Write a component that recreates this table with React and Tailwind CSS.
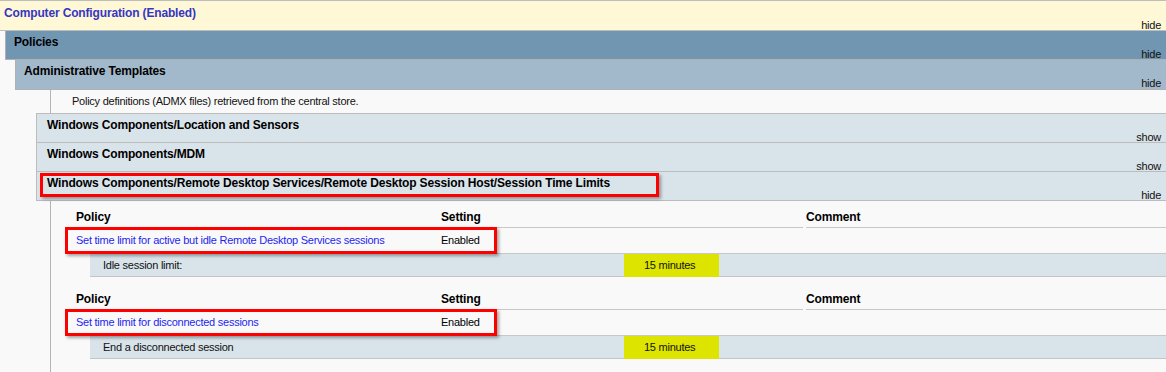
const settings = [
    {
        policy: "Set time limit for active but idle Remote Desktop Services sessions",
        state: "Enabled",
        label: "Idle session limit:",
        value: "15 minutes"
    },
    {
        policy: "Set time limit for disconnected sessions",
        state: "Enabled",
        label: "End a disconnected session",
        value: "15 minutes"
    }
];

const categories = [
    { name: "Windows Components/Location and Sensors", toggle: "show" },
    { name: "Windows Components/MDM", toggle: "show" },
    { name: "Windows Components/Remote Desktop Services/Remote Desktop Session Host/Session Time Limits", toggle: "hide", open: true }
];

// red annotation frame drawn over a row
const Marker = ({ className }) => (
    <div className={`pointer-events-none absolute border-[3px] border-[#ff0000] shadow-[2px_2px_3px_rgba(0,0,0,0.35)] ${className}`} />
);

const SectionHeader = ({ title, toggle, className, titleClass }) => (
    <div className={`flex flex-col ${className}`}>
        <div className={`h-[14px] leading-[14px] text-[12px] font-bold tracking-[-0.15px] ${titleClass}`}>{title}</div>
        <div className="h-[11px] pr-[5px] text-right leading-[11px] text-[#111]">{toggle}</div>
    </div>
);

const PolicyTable = ({ item, first }) => (
    <div className={`ml-[19px] ${first ? "" : "mt-[6px]"}`}>
        <div className="grid h-[27px] grid-cols-[364px_366px_1fr] gap-x-[3px] text-[12px] font-bold leading-[14px] tracking-[-0.15px] text-black">
            <div className="flex items-end border-b border-[#c8c8c8] pb-[3px] pl-[6px]">Policy</div>
            <div className="flex items-end border-b border-[#c8c8c8] pb-[3px] pl-[4px]">Setting</div>
            <div className="flex items-end border-b border-[#c8c8c8] pb-[3px]">Comment</div>
        </div>
        <div className="relative grid h-[26px] grid-cols-[367px_1fr] items-center border-b border-[#c8c8c8]">
            <div className="pl-[6px] text-[#1f1ff0]">{item.policy}</div>
            <div className="pl-[4px] text-black">{item.state}</div>
            <Marker className="-left-[5px] -top-px h-[27px] w-[432px]" />
        </div>
        <div className="ml-[20px] flex h-[23px] items-center border-b border-[#c4c4c4] bg-[#d9e3ea] text-[#111]">
            <div className="w-[534px] pl-[13px]">{item.label}</div>
            <div className="flex h-[23px] w-[95px] items-center bg-[#dde400] pl-[20px]">{item.value}</div>
        </div>
    </div>
);

export default function App() {
    return (
        <div className="h-[372px] w-[1166px] overflow-hidden bg-[#f9f9f9] font-['Liberation_Sans',Arial,sans-serif] text-[11px] tracking-[-0.25px]">
            <SectionHeader
                title="Computer Configuration (Enabled)"
                toggle="hide"
                className="h-[31px] border-y border-[#bdbdbd] bg-[#fff8d6] pl-[4px] pt-[5px]"
                titleClass="text-[#3636c2]"
            />
            <div className="ml-[5px]">
                <SectionHeader
                    title="Policies"
                    toggle="hide"
                    className="h-[29px] border-b border-l border-[#b0b0b0] bg-[#7096b1] pl-[8px] pt-[4px]"
                    titleClass="text-black"
                />
                <div className="ml-[10px]">
                    <SectionHeader
                        title="Administrative Templates"
                        toggle="hide"
                        className="h-[30px] border-b border-l border-[#b0b0b0] bg-[#a2b8cb] pl-[8px] pt-[4px]"
                        titleClass="text-black"
                    />
                    <div className="ml-[35px] h-[300px] border-l border-[#b4b4b4]">
                        <div className="flex h-[23px] items-center pl-[21px] text-[#111]">
                            Policy definitions (ADMX files) retrieved from the central store.
                        </div>
                        <div className="-ml-[15px]">
                            {categories.map(c => (
                                <div key={c.name} className="relative border-l border-t border-[#bcbcbc] last:border-b">
                                    <SectionHeader
                                        title={c.name}
                                        toggle={c.toggle}
                                        className="h-[28px] bg-[#d9e3ea] pl-[10px] pt-[4px]"
                                        titleClass="text-black"
                                    />
                                    {c.open && <Marker className="left-[3px] top-px h-[24px] w-[619px]" />}
                                </div>
                            ))}
                        </div>
                        {settings.map((s, i) => (
                            <PolicyTable key={s.policy} item={s} first={i === 0} />
                        ))}
                    </div>
                </div>
            </div>
        </div>
    );
}
